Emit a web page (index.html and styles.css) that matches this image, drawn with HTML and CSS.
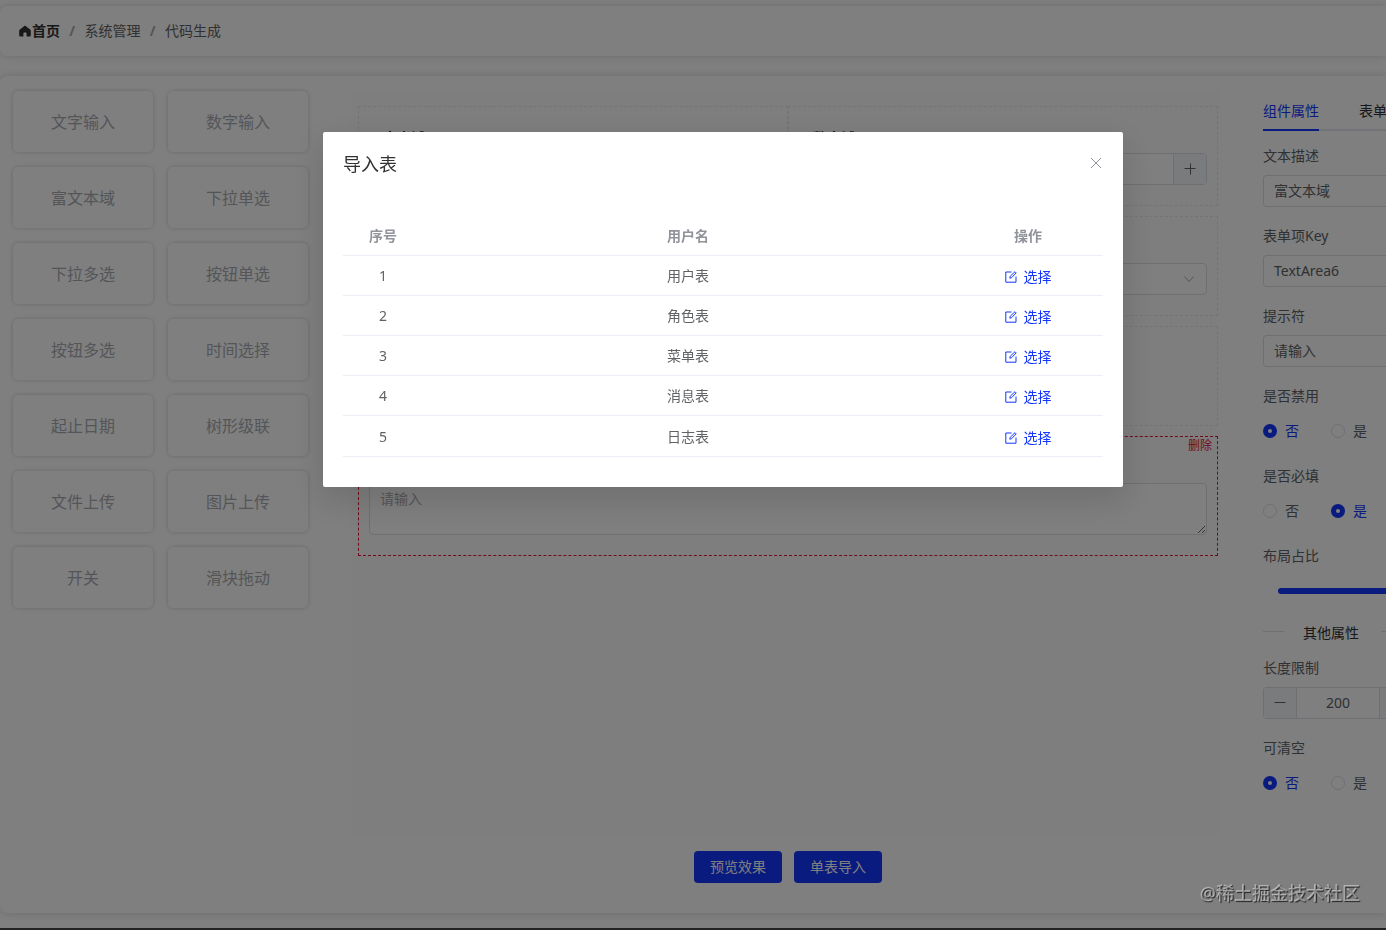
FILE: index.html
```html
<!DOCTYPE html>
<html lang="zh-CN">
<head>
    <meta charset="UTF-8">
    <meta name="viewport" content="width=device-width, initial-scale=1.0">
    <title>代码生成</title>
    <link rel="stylesheet" href="styles.css">
</head>
<body>
    <div class="page">
        <nav class="breadcrumb">
            <svg class="home-icon" viewBox="0 0 12 12"><path d="M6 .4 L.6 4.8 Q0 5.4 .2 6.2 V10.6 Q.2 11.6 1.2 11.6 H4.4 V8.4 Q4.4 7.6 5.2 7.6 H6.8 Q7.6 7.6 7.6 8.4 V11.6 H10.8 Q11.8 11.6 11.8 10.6 V6.2 Q12 5.4 11.4 4.8 Z"/></svg>
            <a class="home">首页</a>
            <span class="sep">/</span>
            <span>系统管理</span>
            <span class="sep">/</span>
            <span>代码生成</span>
        </nav>

        <main class="workspace">
            <div class="palette">
                <div class="block">文字输入</div>
                <div class="block">数字输入</div>
                <div class="block">富文本域</div>
                <div class="block">下拉单选</div>
                <div class="block">下拉多选</div>
                <div class="block">按钮单选</div>
                <div class="block">按钮多选</div>
                <div class="block">时间选择</div>
                <div class="block">起止日期</div>
                <div class="block">树形级联</div>
                <div class="block">文件上传</div>
                <div class="block">图片上传</div>
                <div class="block">开关</div>
                <div class="block">滑块拖动</div>
            </div>

            <div class="center">
                <div class="canvas">
                    <div class="form-item">
                        <label>文本域</label>
                        <div class="field"></div>
                    </div>
                    <div class="form-item">
                        <label>数字域</label>
                        <div class="field">
                            <span class="step"><svg viewBox="0 0 12 12"><path d="M6.5 .5V11.5M.5 5.5H11.5"/></svg></span>
                        </div>
                    </div>
                    <div class="form-item wide">
                        <div class="field">
                            <svg class="chevron" viewBox="0 0 12 12"><path d="M1.5 3.5L6 8.5L10.5 3.5"/></svg>
                        </div>
                    </div>
                    <div class="form-item wide"></div>
                    <div class="form-item wide active">
                        <span class="remove">删除</span>
                        <textarea class="textarea" placeholder="请输入"></textarea>
                    </div>
                </div>
                <div class="actions">
                    <button class="btn">预览效果</button>
                    <button class="btn">单表导入</button>
                </div>
            </div>

            <aside class="props">
                <div class="tabs">
                    <span class="tab current">组件属性</span>
                    <span class="tab">表单</span>
                </div>
                <div class="prop">
                    <label>文本描述</label>
                    <div class="input">富文本域</div>
                </div>
                <div class="prop">
                    <label>表单项Key</label>
                    <div class="input">TextArea6</div>
                </div>
                <div class="prop">
                    <label>提示符</label>
                    <div class="input">请输入</div>
                </div>
                <div class="prop">
                    <label>是否禁用</label>
                    <div class="radios">
                        <span class="radio checked"><i></i><b>否</b></span>
                        <span class="radio"><i></i><b>是</b></span>
                    </div>
                </div>
                <div class="prop">
                    <label>是否必填</label>
                    <div class="radios">
                        <span class="radio"><i></i><b>否</b></span>
                        <span class="radio checked"><i></i><b>是</b></span>
                    </div>
                </div>
                <div class="prop">
                    <label>布局占比</label>
                    <div class="slider"><div class="slider-bar"></div></div>
                </div>
                <div class="divider"><span>其他属性</span></div>
                <div class="prop">
                    <label>长度限制</label>
                    <div class="counter">
                        <span class="step"><svg viewBox="0 0 12 12"><path d="M.5 5.5H11.5"/></svg></span>
                        <span class="value">200</span>
                        <span class="step"></span>
                    </div>
                </div>
                <div class="prop">
                    <label>可清空</label>
                    <div class="radios">
                        <span class="radio checked"><i></i><b>否</b></span>
                        <span class="radio"><i></i><b>是</b></span>
                    </div>
                </div>
            </aside>
        </main>
    </div>

    <div class="overlay">
        <div class="dialog">
            <div class="dialog-header">
                <span>导入表</span>
                <svg class="close" viewBox="0 0 12 12"><path d="M1 1L11 11M11 1L1 11"/></svg>
            </div>
            <table class="tables">
                <thead>
                    <tr><th class="col-index">序号</th><th>用户名</th><th class="col-op">操作</th></tr>
                </thead>
                <tbody id="rows"></tbody>
            </table>
        </div>
    </div>
    <div class="watermark">@稀土掘金技术社区</div>

    <script>
        const names = ['用户表', '角色表', '菜单表', '消息表', '日志表'];
        document.getElementById('rows').innerHTML = names.map((name, i) => `
            <tr>
                <td>${i + 1}</td>
                <td>${name}</td>
                <td><a class="pick"><svg viewBox="0 0 12 12"><path d="M6.5 1H.8V11.2H11V5.5M4.8 7.2L5.2 5.3L10 .7L11.2 1.9L6.6 6.7Z"/></svg>选择</a></td>
            </tr>`).join('');
    </script>
</body>
</html>
```
FILE: styles.css
```css
:root {
    --primary-color: #1436ff;
    --text-color: #606266;
    --border-color: #dcdfe6;
}

* {
    box-sizing: border-box;
}

body {
    margin: 0;
    font-family: "Noto Sans", "Noto Sans CJK SC", sans-serif;
    font-size: 14px;
    color: var(--text-color);
    background: #fff;
    overflow: hidden;
}

svg {
    fill: none;
    stroke: currentColor;
}

.page {
    height: 930px;
    padding-top: 6px;
    border-bottom: 2px solid #444;
    overflow: hidden;
}

.breadcrumb {
    display: flex;
    align-items: center;
    height: 50px;
    padding: 0 0 2px 19px;
    margin-bottom: 20px;
    border-radius: 8px 0 0 8px;
    box-shadow: 0 0 8px rgba(0, 0, 0, 0.16);
}

.home-icon {
    width: 12px;
    height: 12px;
    margin: 2px 1px 0 0;
    fill: #303133;
    stroke: none;
}

.home {
    font-weight: 700;
    color: #303133;
}

.sep {
    width: 24.5px;
    text-align: center;
    font-weight: 700;
    color: #a8abb2;
}

.workspace {
    display: flex;
    height: 837px;
    padding-top: 15px;
    border-radius: 8px 0 0 8px;
    box-shadow: 0 0 8px rgba(0, 0, 0, 0.16);
}

.palette {
    display: grid;
    flex: none;
    grid-template-columns: 140px 140px;
    grid-auto-rows: 61px;
    gap: 15px;
    width: 338px;
    padding-left: 13px;
    align-content: start;
}

.block {
    display: flex;
    align-items: center;
    justify-content: center;
    padding-bottom: 2px;
    border-radius: 5px;
    box-shadow: 0 0 4px rgba(0, 0, 0, 0.2);
    font-size: 16px;
    color: #a8abb2;
}

.center {
    flex: none;
    width: 868px;
    margin-left: 13px;
}

.canvas {
    display: grid;
    grid-template-columns: 1fr 1fr;
    grid-template-rows: 100px 100px 100px 120px;
    row-gap: 10px;
    height: 745px;
    padding: 15px 1px 0 7px;
    background: #fdfdfd;
}

.form-item {
    position: relative;
    padding: 20px 10px 0;
    border: 1px dashed #e8e8e8;
}

.form-item.wide {
    grid-column: span 2;
    padding-top: 46px;
}

.form-item label {
    display: block;
    height: 26px;
    line-height: 22px;
    padding-left: 14px;
    color: #303133;
    font-weight: 700;
}

.field {
    display: flex;
    justify-content: flex-end;
    align-items: center;
    height: 32px;
    border: 1px solid var(--border-color);
    border-radius: 4px;
    background: #fff;
}

.step {
    display: flex;
    align-items: center;
    justify-content: center;
    width: 33px;
    height: 30px;
    background: #f5f7fa;
    border-left: 1px solid var(--border-color);
}

.step svg {
    width: 12px;
    height: 12px;
}

.chevron {
    width: 12px;
    height: 12px;
    margin-right: 11px;
    color: #a8abb2;
}

.form-item.active {
    border-color: #e5123c;
}

.remove {
    position: absolute;
    top: 0;
    right: 5px;
    font-size: 12px;
    line-height: 18px;
    color: #e5123c;
}

.textarea {
    display: block;
    width: 100%;
    height: 52px;
    padding: 4px 10px;
    border: 1px solid var(--border-color);
    border-radius: 4px;
    background: #fff;
    font: inherit;
    line-height: 21px;
    resize: vertical;
}

.textarea::placeholder {
    color: #a8abb2;
}

.actions {
    display: flex;
    justify-content: center;
    gap: 12px;
    padding: 15px 0 0 6px;
}

.btn {
    width: 88px;
    height: 32px;
    padding: 0 0 2px;
    border: none;
    border-radius: 4px;
    background: var(--primary-color);
    color: #fff;
    font: inherit;
}

.props {
    flex: 1;
    min-width: 0;
    margin-left: 44px;
    overflow: hidden;
}

.tabs {
    display: flex;
    gap: 40px;
    height: 40px;
    margin-bottom: 10px;
    line-height: 40px;
    border-bottom: 2px solid #e4e7ed;
    color: #303133;
    white-space: nowrap;
}

.tab {
    height: 40px;
}

.tab.current {
    color: var(--primary-color);
    border-bottom: 2px solid var(--primary-color);
}

.prop {
    height: 80px;
}

.prop label {
    display: block;
    height: 34px;
    line-height: 30px;
}

.input,
.counter {
    height: 32px;
    line-height: 30px;
    border: 1px solid var(--border-color);
    border-radius: 4px 0 0 4px;
}

.input {
    padding: 0 10px;
    border-right: none;
}

.radios {
    display: flex;
    gap: 32px;
    height: 32px;
    align-items: center;
}

.radio {
    display: flex;
    align-items: center;
    gap: 8px;
}

.radio i {
    width: 14px;
    height: 14px;
    border: 1px solid var(--border-color);
    border-radius: 50%;
    background: #fff;
}

.radio b {
    padding-bottom: 2px;
    font-weight: 400;
}

.radio.checked {
    color: var(--primary-color);
}

.radio.checked i {
    border: 5px solid var(--primary-color);
}

.slider {
    padding: 13px 0 0 15px;
}

.slider-bar {
    height: 6px;
    border-radius: 3px 0 0 3px;
    background: var(--primary-color);
}

.divider {
    display: flex;
    align-items: center;
    height: 24px;
    margin: -1px 0 9px;
    color: #303133;
    white-space: nowrap;
}

.divider::before,
.divider::after {
    content: "";
    width: 21px;
    height: 1px;
    margin-bottom: 2px;
    background: var(--border-color);
}

.divider::after {
    width: auto;
    flex: 1;
}

.divider span {
    padding: 0 22px 0 19px;
}

.counter {
    display: flex;
    border-right: none;
}

.counter .step {
    border-left: none;
    border-right: 1px solid var(--border-color);
}

.counter .value {
    flex: 1;
    text-align: center;
}

.counter .step:last-child {
    width: 7px;
    border-right: none;
    border-left: 1px solid var(--border-color);
}

.overlay {
    position: fixed;
    inset: 0;
    padding-top: 132px;
    background: rgba(0, 0, 0, 0.5);
}

.dialog {
    width: 800px;
    height: 355px;
    margin-left: 323px;
    padding: 20px;
    background: #fff;
    border-radius: 2px;
    box-shadow: 0 12px 32px 4px rgba(0, 0, 0, 0.12);
}

.dialog-header {
    display: flex;
    justify-content: space-between;
    height: 64px;
    line-height: 24px;
    font-size: 18px;
    color: #303133;
}

.close {
    width: 12px;
    height: 12px;
    margin: 5px 1px 0 0;
    color: #909399;
}

.tables {
    width: 760px;
    table-layout: fixed;
    border-spacing: 0;
    text-align: center;
}

.tables th,
.tables td {
    height: 40px;
    padding: 1px 0 0;
    line-height: 22px;
    border-bottom: 1px solid #ebeef5;
}

.tables tr:last-child td {
    height: 41px;
}

.tables thead th {
    height: 40px;
    color: #909399;
    font-weight: 700;
}

.col-index {
    width: 80px;
}

.col-op {
    width: 150px;
}

.pick {
    display: flex;
    align-items: center;
    justify-content: center;
    gap: 7px;
    padding-top: 2px;
    color: var(--primary-color);
}

.pick svg {
    width: 12px;
    height: 12px;
}

.watermark {
    position: fixed;
    right: 26px;
    bottom: 24px;
    font-size: 18px;
    font-weight: 500;
    line-height: 26px;
    color: rgba(255, 255, 255, 0.45);
    text-shadow: 1px 1px 1px rgba(0, 0, 0, 0.7);
}
```
